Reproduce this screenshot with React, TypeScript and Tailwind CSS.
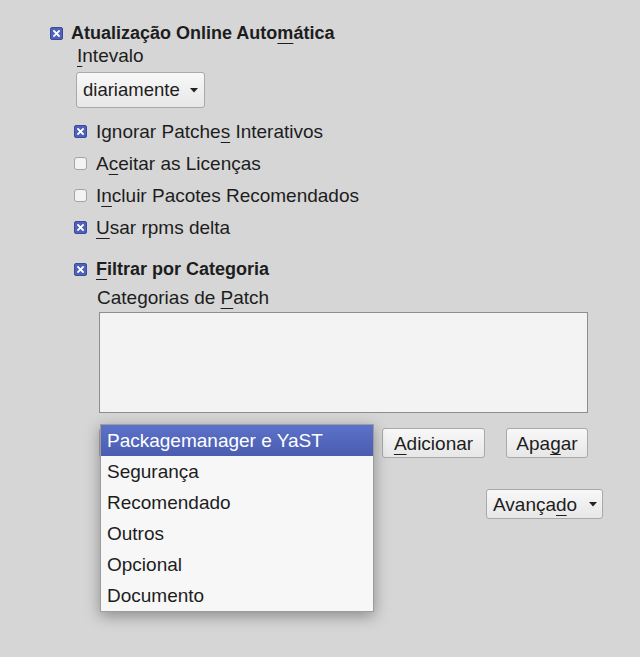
import React from "react";

function U({ children }: { children: React.ReactNode }) {
  return <span className="underline decoration-1 underline-offset-[4px]">{children}</span>;
}

function Check({ checked }: { checked: boolean }) {
  if (checked) {
    return (
      <span className="flex h-[13px] w-[13px] shrink-0 items-center justify-center rounded-[2px] border border-[#3b4a99] bg-[#4f61ba]">
        <svg width="7" height="7" viewBox="0 0 7 7">
          <path d="M1 1L6 6M6 1L1 6" stroke="white" strokeWidth="1.8" strokeLinecap="square" />
        </svg>
      </span>
    );
  }
  return <span className="block h-[13px] w-[13px] shrink-0 rounded-[3px] border border-[#a3a3a3] bg-[#f3f3f3]" />;
}

function Arrow() {
  return (
    <svg width="8" height="5" viewBox="0 0 8 5" className="shrink-0">
      <path d="M0 0H8L4 4.5Z" fill="#222" />
    </svg>
  );
}

const btn =
  "flex h-[30px] items-center rounded-[3px] border border-[#a9a9a9] bg-gradient-to-b from-[#f8f8f8] to-[#e7e7e7]";

export default function App() {
  const items = ["Packagemanager e YaST", "Segurança", "Recomendado", "Outros", "Opcional", "Documento"];
  return (
    <div className="min-h-[657px] w-[640px] bg-[#d6d6d6] pl-[50px] pt-[24px] font-['Liberation_Sans',Arial,sans-serif] text-[19px] leading-none text-[#1d1d1d]">
      <div className="flex h-[18px] items-center gap-[8px]">
        <Check checked />
        <span className="text-[18px] font-bold">
          Atualização Online Auto<U>m</U>ática
        </span>
      </div>
      <div className="ml-[27px] mt-[2px] flex h-[22px] items-center">
        <span>
          <U>I</U>ntevalo
        </span>
      </div>
      <div className={`ml-[26px] mt-[6px] w-[129px] gap-[10px] pl-[6px] ${btn} !h-[36px]`}>
        <span className="text-[18.5px]">diariamente</span>
        <Arrow />
      </div>

      <div className="ml-[24px] mt-[7px]">
        {[
          { c: true, l: <>Ignorar Patche<U>s</U> Interativos</> },
          { c: false, l: <>A<U>c</U>eitar as Licenças</> },
          { c: false, l: <>I<U>n</U>cluir Pacotes Recomendados</> },
          { c: true, l: <><U>U</U>sar rpms delta</> },
        ].map((r, i) => (
          <div key={i} className="flex h-[32px] items-center gap-[9px]">
            <Check checked={r.c} />
            <span>{r.l}</span>
          </div>
        ))}

        <div className="mt-[10px] flex h-[32px] items-center gap-[9px]">
          <Check checked />
          <span className="text-[18px] font-bold">
            <U>F</U>iltrar por Categoria
          </span>
        </div>
        <div className="ml-[23px] mt-[1px] flex h-[22px] items-center">
          <span>
            Categorias de <U>P</U>atch
          </span>
        </div>
        <div className="ml-[25px] mt-[4px] h-[101px] w-[489px] border border-[#8e8e8e] bg-[#f3f3f3]" />

        <div className="relative ml-[25px] mt-[15px] flex items-center">
          <div className={`h-[30px] w-[274px] ${btn}`} />
          <div className={`ml-[9px] w-[103px] justify-center ${btn}`}>
            <span>
              <U>A</U>dicionar
            </span>
          </div>
          <div className={`ml-[21px] w-[82px] justify-center ${btn}`}>
            <span>
              Apa<U>g</U>ar
            </span>
          </div>

          <div className="absolute left-[1px] top-[-4px] z-10 w-[274px] border border-[#9c9c9c] bg-[#f7f7f7] shadow-[0_4px_14px_rgba(0,0,0,0.35)]">
            {items.map((t, i) => (
              <div
                key={t}
                className={`flex h-[31px] items-center pl-[6px] ${
                  i === 0 ? "bg-gradient-to-b from-[#5c71c9] to-[#4a5db0] text-white" : ""
                }`}
              >
                {t}
              </div>
            ))}
          </div>
        </div>

        <div className="mt-[31px] flex w-[529px] justify-end">
          <div className={`w-[117px] gap-[12px] pl-[6px] ${btn}`}>
            <span>
              Avança<U>d</U>o
            </span>
            <Arrow />
          </div>
        </div>
      </div>
    </div>
  );
}
